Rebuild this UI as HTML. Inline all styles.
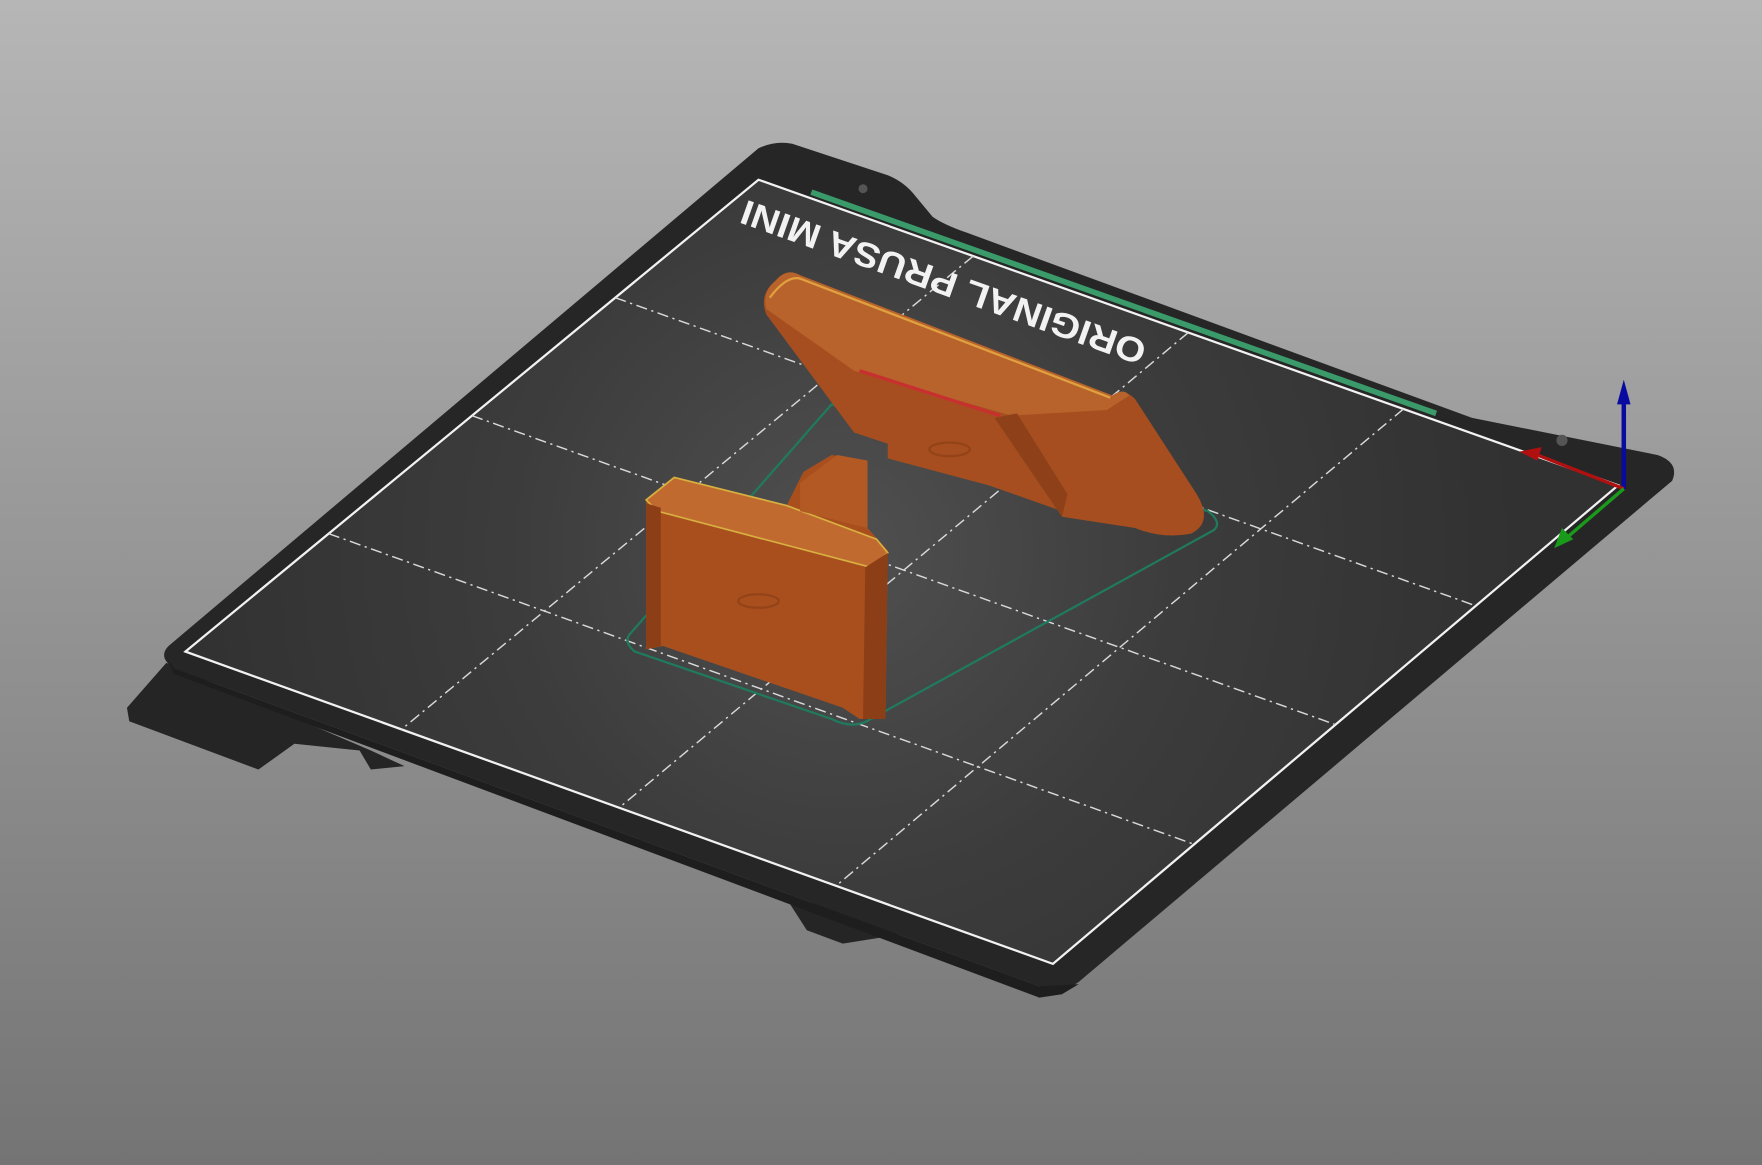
<!DOCTYPE html>
<html><head><meta charset="utf-8"><style>
html,body{margin:0;padding:0;width:1762px;height:1165px;overflow:hidden;background:#999}
svg{display:block}
</style></head><body>
<svg width="1762" height="1165" viewBox="0 0 1568 1037" preserveAspectRatio="none" xmlns="http://www.w3.org/2000/svg">
<defs>
<linearGradient id="bg" x1="0" y1="0" x2="0" y2="1">
<stop offset="0" stop-color="#b6b6b6"/><stop offset="1" stop-color="#747474"/>
</linearGradient>
<radialGradient id="bed" cx="750" cy="490" r="600" gradientUnits="userSpaceOnUse">
<stop offset="0" stop-color="#505050"/><stop offset="0.5" stop-color="#3c3c3c"/><stop offset="1" stop-color="#313131"/>
</radialGradient>
</defs>
<rect width="1568" height="1037" fill="url(#bg)"/>
<path d="M148,590 L113,630 L115,642 L230,685 L262,662 L320,668 L330,685 L360,682 L330,668 Z" fill="#252525"/>
<path d="M700,800 L718,828 L750,840 L800,832 L790,815 Z" fill="#252525"/>
<path d="M675,132 Q690,125 705,128 L790,156 Q805,162 815,175 L830,193 Q840,200 860,207 L1310,372 L1475,405 Q1495,412 1488,428 L960,874 Q945,885 925,878 L155,595 Q140,585 150,575 Z" fill="#262626"/>
<path d="M148,585 L155,600 L925,888 L945,885 L960,876 L925,878 L155,595 Z" fill="#1e1e1e"/>
<polygon points="675,160 1440,432 937,858 165,580" fill="url(#bed)" stroke="#f2f2f2" stroke-width="2"/>
<g stroke="#d8d8d8" stroke-width="1.3" stroke-dasharray="10,4,2,4" fill="none">
<line x1="547.5" y1="265" x2="1314" y2="539.5"/>
<line x1="420" y1="370" x2="1188.5" y2="645"/>
<line x1="292.5" y1="475" x2="1062.5" y2="751.5"/>
<line x1="866" y1="228" x2="357" y2="649.5"/>
<line x1="1057.5" y1="296" x2="551" y2="719"/>
<line x1="1249" y1="364" x2="744" y2="788.5"/>
</g>
<line x1="722" y1="171" x2="1278" y2="368" stroke="#3a9a6a" stroke-width="5"/>
<circle cx="768" cy="168" r="4" fill="#555"/><circle cx="1390" cy="392" r="5" fill="#555"/>
<text transform="translate(1022,305) rotate(199.6)" font-family="Liberation Sans, sans-serif" font-weight="bold" font-size="31" fill="#f2f2f2" textLength="380" lengthAdjust="spacingAndGlyphs">ORIGINAL PRUSA MINI</text>
<path d="M560,565 L740,360 L1075,455 Q1088,465 1080,472 L775,640 Q760,650 740,640 L565,580 Q555,572 560,565 Z" fill="none" stroke="#1f7a5e" stroke-width="2"/>
<path d="M690,250 Q700,238 712,245 L990,352 Q1000,345 1010,355 L1065,440 Q1080,465 1060,475 Q1035,480 1010,470 L945,460 L945,455 L880,432 L790,408 L790,395 L760,385 L682,280 Q675,262 690,250 Z" fill="#a64e1f"/>
<path d="M690,250 Q700,238 712,245 L990,352 Q1000,345 1005,352 L985,365 L900,370 L760,330 L682,275 Q678,260 690,250 Z" fill="#b8632b"/>
<line x1="765" y1="330" x2="890" y2="370" stroke="#c83030" stroke-width="3"/>
<path d="M885,372 L905,368 L950,440 L945,460 Z" fill="#8e4118"/>
<path d="M685,265 Q700,245 712,248 L988,354" fill="none" stroke="#e0a040" stroke-width="2"/>
<path d="M575,445 L600,425 L700,450 L715,420 L740,405 L772,410 L772,470 L790,490 L788,640 L765,640 L750,630 L590,575 L575,578 Z" fill="#a94f1e"/>
<path d="M575,445 L600,425 L700,450 L780,480 L790,492 L775,505 L585,455 Z" fill="#c06a30" stroke="#d8b040" stroke-width="1.5"/>
<path d="M770,505 L790,492 L788,640 L768,640 Z" fill="#8c3f17"/>
<path d="M575,448 L588,452 L588,575 L575,578 Z" fill="#8c3f17"/>
<path d="M712,430 L745,405 L772,410 L772,470 L712,455 Z" fill="#b35a24"/>
<ellipse cx="675" cy="535" rx="18" ry="6" fill="none" stroke="#944318" stroke-width="2"/>
<ellipse cx="845" cy="400" rx="18" ry="6" fill="none" stroke="#944318" stroke-width="2"/>
<line x1="1445" y1="435" x2="1445" y2="355" stroke="#0a0aa0" stroke-width="4"/>
<polygon points="1445,338 1439,360 1451,360" fill="#0a0aa0"/>
<line x1="1445" y1="435" x2="1368" y2="405" stroke="#b01010" stroke-width="3"/>
<polygon points="1352,402 1372,398 1368,410" fill="#b01010"/>
<line x1="1445" y1="435" x2="1395" y2="478" stroke="#1a9a1a" stroke-width="3"/>
<polygon points="1383,488 1390,470 1400,480" fill="#1a9a1a"/>
</svg>
</body></html>
